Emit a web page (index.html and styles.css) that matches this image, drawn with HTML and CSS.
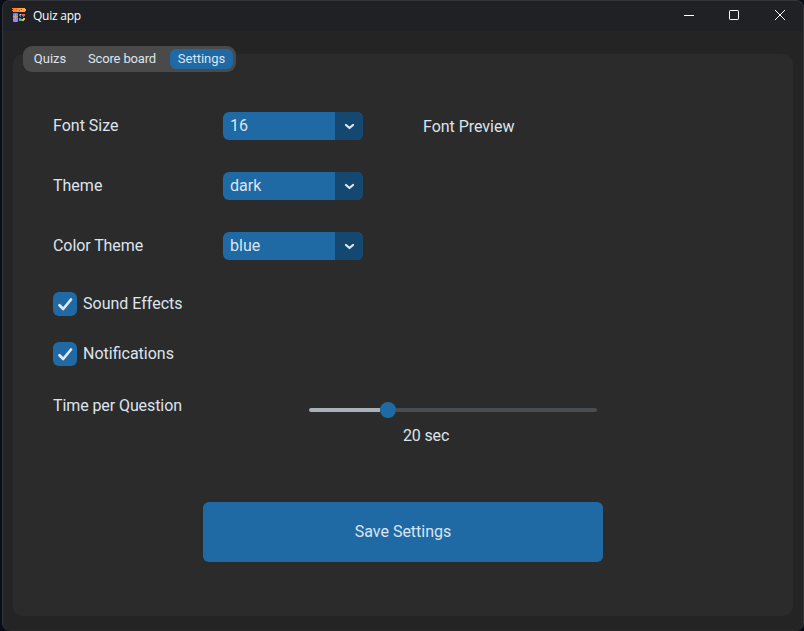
FILE: index.html
```html
<!DOCTYPE html>
<html lang="en">
<head>
<meta charset="utf-8">
<title>Quiz app</title>
<link rel="stylesheet" href="styles.css">
</head>
<body>
<div class="window">
  <header class="titlebar">
    <svg class="app-icon" width="14" height="14" viewBox="0 0 14 14">
      <defs>
        <linearGradient id="banner"><stop offset="0" stop-color="#ff7535"/><stop offset="1" stop-color="#ffb34a"/></linearGradient>
        <linearGradient id="card" x2="0" y2="1"><stop offset="0" stop-color="#5c8cf5"/><stop offset="1" stop-color="#b77bfa"/></linearGradient>
      </defs>
      <path d="M0 0h13v1h1v2h-1v1H1V3H0V2h1V1H0z" fill="url(#banner)"/>
      <path d="M4 1h1v1H4zM7 2h1v1H7zM9 1h1v1H9z" fill="#b9602f"/>
      <rect x="1" y="5" width="5" height="9" rx="1" fill="url(#card)"/>
      <path d="M3 6h1v2h2v1H4v2H3V9H1V8h2z" fill="#e59a62"/>
      <path d="M7 6h3v1H9v2H8V8H7z" fill="#477ce8"/>
      <path d="M10 6h3v2h-1v1h-1V8h-1z" fill="#ef5360"/>
      <path d="M7 10h2v1h1v2H7z" fill="#2dbd91"/>
      <path d="M11 10h2v2h-1v1h-2v-2h1z" fill="#f4b44c"/>
      <path d="M8 6h1v1H8z" fill="#b9cbe0"/>
    </svg>
    <span class="title">Quiz app</span>
    <div class="controls">
      <svg width="12" height="12" viewBox="0 0 12 12"><path d="M2 6.5h10"/></svg>
      <svg width="12" height="12" viewBox="0 0 12 12"><rect x="1.5" y="1.5" width="9" height="9" rx=".7"/></svg>
      <svg width="12" height="12" viewBox="0 0 12 12"><path d="M1 1l10 10M11 1L1 11"/></svg>
    </div>
  </header>
  <main class="panel">
    <nav class="tabs">
      <button class="tab tab-quizs">Quizs</button>
      <button class="tab tab-score">Score board</button>
      <button class="tab tab-settings active">Settings</button>
    </nav>
    <section class="settings">
      <div class="row">
        <span class="label">Font Size</span>
        <div class="select"><span class="value">16</span><span class="arrow"><svg width="12" height="8" viewBox="0 0 12 8"><path d="M3 3L6.5 6L10 3"/></svg></span></div>
        <span class="preview">Font Preview</span>
      </div>
      <div class="row">
        <span class="label">Theme</span>
        <div class="select"><span class="value">dark</span><span class="arrow"><svg width="12" height="8" viewBox="0 0 12 8"><path d="M3 3L6.5 6L10 3"/></svg></span></div>
      </div>
      <div class="row">
        <span class="label tight">Color Theme</span>
        <div class="select"><span class="value">blue</span><span class="arrow"><svg width="12" height="8" viewBox="0 0 12 8"><path d="M3 3L6.5 6L10 3"/></svg></span></div>
      </div>
      <div class="check"><span class="box"><svg width="24" height="24" viewBox="0 0 24 24"><path d="M6.5 13.3l3.7 3.7L18 7.5"/></svg></span><span class="check-text">Sound Effects</span></div>
      <div class="check"><span class="box"><svg width="24" height="24" viewBox="0 0 24 24"><path d="M6.5 13.3l3.7 3.7L18 7.5"/></svg></span><span class="check-text">Notifications</span></div>
      <div class="time">
        <span class="time-label">Time per Question</span>
        <div class="slider"><span class="filled"></span><span class="thumb"></span><span class="rest"></span></div>
      </div>
      <div class="seconds">20 sec</div>
      <button class="save">Save Settings</button>
    </section>
  </main>
</div>
</body>
</html>
```
FILE: styles.css
```css
* { box-sizing: border-box; }
body {
  margin: 0;
  height: 631px;
  padding: 0 0 0 2px;
  overflow: hidden;
  background: #090d18;
  color: #dce4ee;
  font: 16px/20px Roboto, sans-serif;
}
button {
  border: 0;
  padding: 0;
  color: inherit;
  font: inherit;
}
.window {
  width: 802px;
  height: 631px;
  border: 1px solid #34353b;
  border-bottom-color: #29292b;
  border-radius: 8px;
  background: #242424;
  overflow: hidden;
}
.titlebar {
  height: 30px;
  display: flex;
  align-items: center;
  padding: 0 17px 0 9px;
  background: #202124;
  color: #fff;
}
.app-icon { margin-top: -2px; }
.title {
  margin-left: 7px;
  font: 12px/16px "Open Sans", sans-serif;
  letter-spacing: -0.25px;
}
.controls {
  display: flex;
  gap: 34px;
  margin-left: auto;
  margin-top: -2px;
}
.controls svg {
  fill: none;
  stroke: #fff;
  stroke-width: 1;
}
.panel {
  display: flow-root;
  width: 780px;
  height: 562px;
  margin: 23px 0 0 10px;
  padding: 0 10px;
  border-radius: 10px;
  background: #2b2b2b;
}
.tabs {
  width: 213px;
  height: 26px;
  margin-top: -8px;
  display: flex;
  align-items: center;
  padding: 0 3px;
  border-radius: 9px;
  background: #4a4a4a;
  font-size: 13px;
  line-height: 20px;
}
.tab {
  height: 20px;
  border-radius: 6px;
  background: transparent;
}
.tab-quizs { width: 48px; }
.tab-score {
  width: 96px;
  letter-spacing: -0.16px;
}
.tab-settings { width: 63px; }
.tab.active { background: #1f6aa5; }
.settings { padding: 24px 30px 0; }
.row {
  height: 60px;
  display: grid;
  grid-template-columns: 170px 200px 1fr;
  align-items: center;
}
.tight { letter-spacing: -0.08px; }
.preview {
  padding-top: 2px;
  letter-spacing: -0.03px;
}
.select {
  width: 140px;
  height: 28px;
  display: flex;
  border-radius: 6px;
  overflow: hidden;
  background: #1f6aa5;
}
.value {
  flex: 1;
  padding: 4px 0 0 7px;
}
.arrow {
  width: 28px;
  display: grid;
  place-items: center;
  background: #144870;
}
.arrow svg, .box svg {
  fill: none;
  stroke: #dce4ee;
  stroke-linecap: round;
  stroke-linejoin: round;
}
.arrow svg { stroke-width: 2.3; }
.check {
  height: 24px;
  display: flex;
  gap: 6px;
  align-items: center;
  margin-top: 16px;
}
.check + .check { margin-top: 26px; }
.box {
  width: 24px;
  height: 24px;
  border-radius: 6px;
  background: #1f6aa5;
}
.box svg {
  display: block;
  stroke: #e5e7ea;
  stroke-width: 2.7;
}
.time {
  display: flex;
  margin-top: 30px;
  height: 20px;
}
.time-label {
  width: 256px;
  letter-spacing: -0.09px;
}
.slider {
  width: 288px;
  height: 16px;
  margin-top: 6px;
  display: flex;
  align-items: center;
}
.filled {
  width: 71px;
  height: 4px;
  border-radius: 2px 0 0 2px;
  background: #aab0b5;
}
.thumb {
  width: 16px;
  height: 16px;
  border-radius: 50%;
  background: #1f6aa5;
}
.rest {
  flex: 1;
  height: 4px;
  border-radius: 0 2px 2px 0;
  background: #4a4d50;
}
.seconds {
  margin: 10px 0 0 350px;
  letter-spacing: -0.15px;
}
.save {
  display: block;
  width: 400px;
  height: 60px;
  margin: 56px 0 0 150px;
  border-radius: 6px;
  background: #1f6aa5;
}
```
